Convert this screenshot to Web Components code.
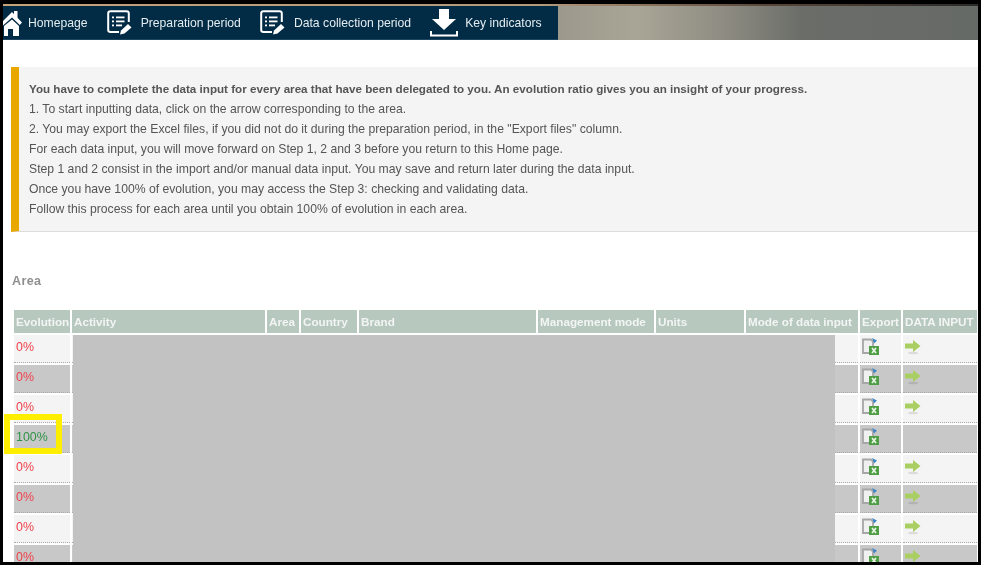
<!DOCTYPE html>
<html lang="en">
<head>
<meta charset="utf-8">
<title>Data input</title>
<style>
  html, body { margin: 0; padding: 0; background: #fff; overflow: hidden; }
  body { font-family: "Liberation Sans", Arial, sans-serif; }
</style>
</head>
<body>
<app-frame>
  <nav-bar>
    <nav-item icon="home" label="Homepage"></nav-item>
    <nav-item icon="list" label="Preparation period"></nav-item>
    <nav-item icon="list" label="Data collection period"></nav-item>
    <nav-item icon="download" label="Key indicators"></nav-item>
  </nav-bar>
  <notice-box>
    <b>You have to complete the data input for every area that have been delegated to you. An evolution ratio gives you an insight of your progress.</b>
    <div>1. To start inputting data, click on the arrow corresponding to the area.</div>
    <div>2. You may export the Excel files, if you did not do it during the preparation period, in the "Export files" column.</div>
    <div>For each data input, you will move forward on Step 1, 2 and 3 before you return to this Home page.</div>
    <div>Step 1 and 2 consist in the import and/or manual data input. You may save and return later during the data input.</div>
    <div>Once you have 100% of evolution, you may access the Step 3: checking and validating data.</div>
    <div>Follow this process for each area until you obtain 100% of evolution in each area.</div>
  </notice-box>
  <area-table></area-table>
</app-frame>

<script>
const ICONS = {
  home: `<svg width="19" height="26" viewBox="0 0 19 26"><path d="M-2 13 L9 2 L19 12.500 L16.800 15 L9 7.500 L0 15.500Z" fill="#fff"/><rect x="11" y="1" width="3.500" height="7" fill="#fff"/><path d="M1 16 L9 9.500 L16 16 V26 H10 V19 H5 V26 H1Z" fill="#fff"/></svg>`,
  list: `<svg width="25" height="25" viewBox="0 0 25 25"><path d="M12 22 H3.500 Q1.200 22 1.200 19.700 V3.500 Q1.200 1.200 3.500 1.200 H19.500 Q21.800 1.200 21.800 3.500 V12" fill="none" stroke="#fff" stroke-width="2"/><g fill="#fff"><rect x="5" y="6.500" width="2" height="1.800"/><rect x="9" y="6.500" width="8.500" height="1.800"/><rect x="5" y="10.500" width="2" height="1.800"/><rect x="9" y="10.500" width="8.500" height="1.800"/><rect x="5" y="14.500" width="2" height="1.800"/><rect x="9" y="14.500" width="6" height="1.800"/><path d="M13 24.500 L14 20.500 L21 14 L24.500 17.500 L17.500 23.500Z"/></g></svg>`,
  download: `<svg width="28" height="29" viewBox="0 0 28 29"><path d="M9 1 H19 V11 H26 L14 22 L2 11 H9Z" fill="#fff"/><path d="M1 23 V27.500 H27 V23" fill="none" stroke="#fff" stroke-width="2"/></svg>`,
  excel: `<svg width="18" height="18" viewBox="0 0 18 18"><path d="M2 1.500 H10 L12 3.500 V15 H2Z" fill="#f0f0f0" stroke="#a6a6a6" stroke-width="1.800"/><path d="M11 0 L16 2.500 L13 5.500Z" fill="#3f86c6"/><rect x="8" y="8" width="10" height="9" fill="#4f9d45"/><path d="M11 10 L15 15 M15 10 L11 15" stroke="#e8f5e4" stroke-width="1.700"/></svg>`,
  arrow: `<svg width="16" height="16" viewBox="0 0 16 16"><ellipse cx="8" cy="14" rx="5" ry="1.300" fill="#000" opacity=".1"/><path d="M0 4.500 H8 V1 L15.500 7 L8 13 V9.500 H0Z" fill="#a9cf62"/></svg>`
};

class AppFrame extends HTMLElement {
  constructor() {
    super();
    this.attachShadow({ mode: 'open' });
    this.shadowRoot.innerHTML = `
      <style>
        :host {
          display: block;
          box-sizing: border-box;
          width: 981px;
          height: 565px;
          border: solid #000;
          border-width: 4px 3px 3px 3px;
          overflow: hidden;
          background: #fff;
          filter: blur(.4px);
        }
      </style>
      <slot></slot>
    `;
  }
}

class NavBar extends HTMLElement {
  constructor() {
    super();
    this.attachShadow({ mode: 'open' });
    this.shadowRoot.innerHTML = `
      <style>
        :host {
          display: block;
          height: 34px;
          border-top: 2px solid;
          border-image: linear-gradient(90deg, #c4a27a, #b29a7c 55%, #5a4638 78%, #2a2a2a) 1;
          background: linear-gradient(90deg, #9c998c 57%, #a9a596 65%, #8e8c82 74%, #6a6d68 82%, #666a66 100%);
        }
        .items {
          display: flex;
          align-items: center;
          width: 555px;
          height: 33px;
          background: #022b45;
          border-bottom: 1px solid #1c4560;
        }
      </style>
      <div class="items"><slot></slot></div>
    `;
  }
}

class NavItem extends HTMLElement {
  constructor() {
    super();
    this.attachShadow({ mode: 'open' });
    const icon = this.getAttribute('icon');
    this.shadowRoot.innerHTML = `
      <style>
        :host {
          display: flex;
          align-items: center;
          gap: 9px;
          color: #e4ecf0;
          font: 12.2px "Liberation Sans", Arial, sans-serif;
          margin-right: 19px;
          white-space: nowrap;
        }
        :host([icon="home"]) { gap: 6px; }
        :host([icon="download"]) { gap: 7px; }
        .icon { display: flex; }
      </style>
      <span class="icon">${ICONS[icon]}</span>
      <span>${this.getAttribute('label')}</span>
    `;
  }
}

class NoticeBox extends HTMLElement {
  constructor() {
    super();
    this.attachShadow({ mode: 'open' });
    this.shadowRoot.innerHTML = `
      <style>
        :host {
          display: block;
          box-sizing: border-box;
          height: 165px;
          margin: 27px 0 0 8px;
          padding: 12px 0 0 10px;
          background: #f4f4f4;
          border-left: 8px solid #e8a800;
          border-bottom: 1px solid #dcdcdc;
          color: #555;
          font: 12.2px/20px "Liberation Sans", Arial, sans-serif;
        }
        ::slotted(b) { font-size: 11.65px; }
      </style>
      <slot></slot>
    `;
  }
}

class AreaTable extends HTMLElement {
  constructor() {
    super();
    this.attachShadow({ mode: 'open' });
    const heads = ['Evolution', 'Activity', 'Area', 'Country', 'Brand', 'Management mode', 'Units', 'Mode of data input', 'Export', 'DATA INPUT'];
    const rows = [
      ['0%', true], ['0%', true], ['0%', true], ['100%', false],
      ['0%', true], ['0%', true], ['0%', true], ['0%', true]
    ];
    const headHtml = heads.map(h => `<div class="th">${h}</div>`).join('');
    const rowHtml = rows.map(([value, hasArrow], i) => {
      const done = value === '100%';
      const shade = i % 2 ? ' shade' : '';
      return `
        <div class="td pct${done ? ' done' : ''}${shade}">${value}</div>
        <div class="td wide${shade}"></div>
        <div class="td file${shade}">${ICONS.excel}</div>
        <div class="td go${shade}">${hasArrow ? ICONS.arrow : ''}</div>`;
    }).join('');
    this.shadowRoot.innerHTML = `
      <style>
        :host {
          display: block;
          position: relative;
          font: 11.7px "Liberation Sans", Arial, sans-serif;
        }
        h2 {
          margin: 42px 0 22px 9px;
          font-size: 12.5px;
          line-height: 14px;
          font-weight: bold;
          color: #8f8f8f;
          letter-spacing: .4px;
        }
        .grid {
          display: grid;
          grid-template-columns: 56px 193px 32px 56px 177px 116px 88px 112px 41px 74px;
          column-gap: 2px;
          margin-left: 11px;
          width: 963px;
        }
        .th {
          height: 23px;
          line-height: 23px;
          padding-left: 2px;
          margin-bottom: 2px;
          background: #b7c8bf;
          color: #f2f5f3;
          font-weight: bold;
          white-space: nowrap;
          overflow: hidden;
        }
        .td {
          box-sizing: border-box;
          height: 28px;
          margin-bottom: 2px;
          padding: 0 0 3px 2px;
          display: flex;
          align-items: center;
          background: #f4f4f4;
          border-bottom: 1px dotted #aaa;
        }
        .td.file { padding-left: 1px; }
        .td.wide { grid-column: 2 / 9; }
        .td.shade { background: #c8c8c8; }
        .pct { color: #f0404a; font-size: 12.4px; }
        .pct.done { color: #2e9345; }
        .mask {
          position: absolute;
          left: 70px;
          top: 61px;
          width: 762px;
          height: 240px;
          background: #c2c2c2;
        }
        .mark {
          position: absolute;
          left: 1px;
          top: 140px;
          width: 46px;
          height: 28px;
          border: 6px solid #ffee00;
        }
      </style>
      <h2>Area</h2>
      <div class="grid">${headHtml}${rowHtml}</div>
      <div class="mask"></div>
      <div class="mark"></div>
    `;
  }
}

customElements.define('app-frame', AppFrame);
customElements.define('nav-bar', NavBar);
customElements.define('nav-item', NavItem);
customElements.define('notice-box', NoticeBox);
customElements.define('area-table', AreaTable);
</script>
</body>
</html>
